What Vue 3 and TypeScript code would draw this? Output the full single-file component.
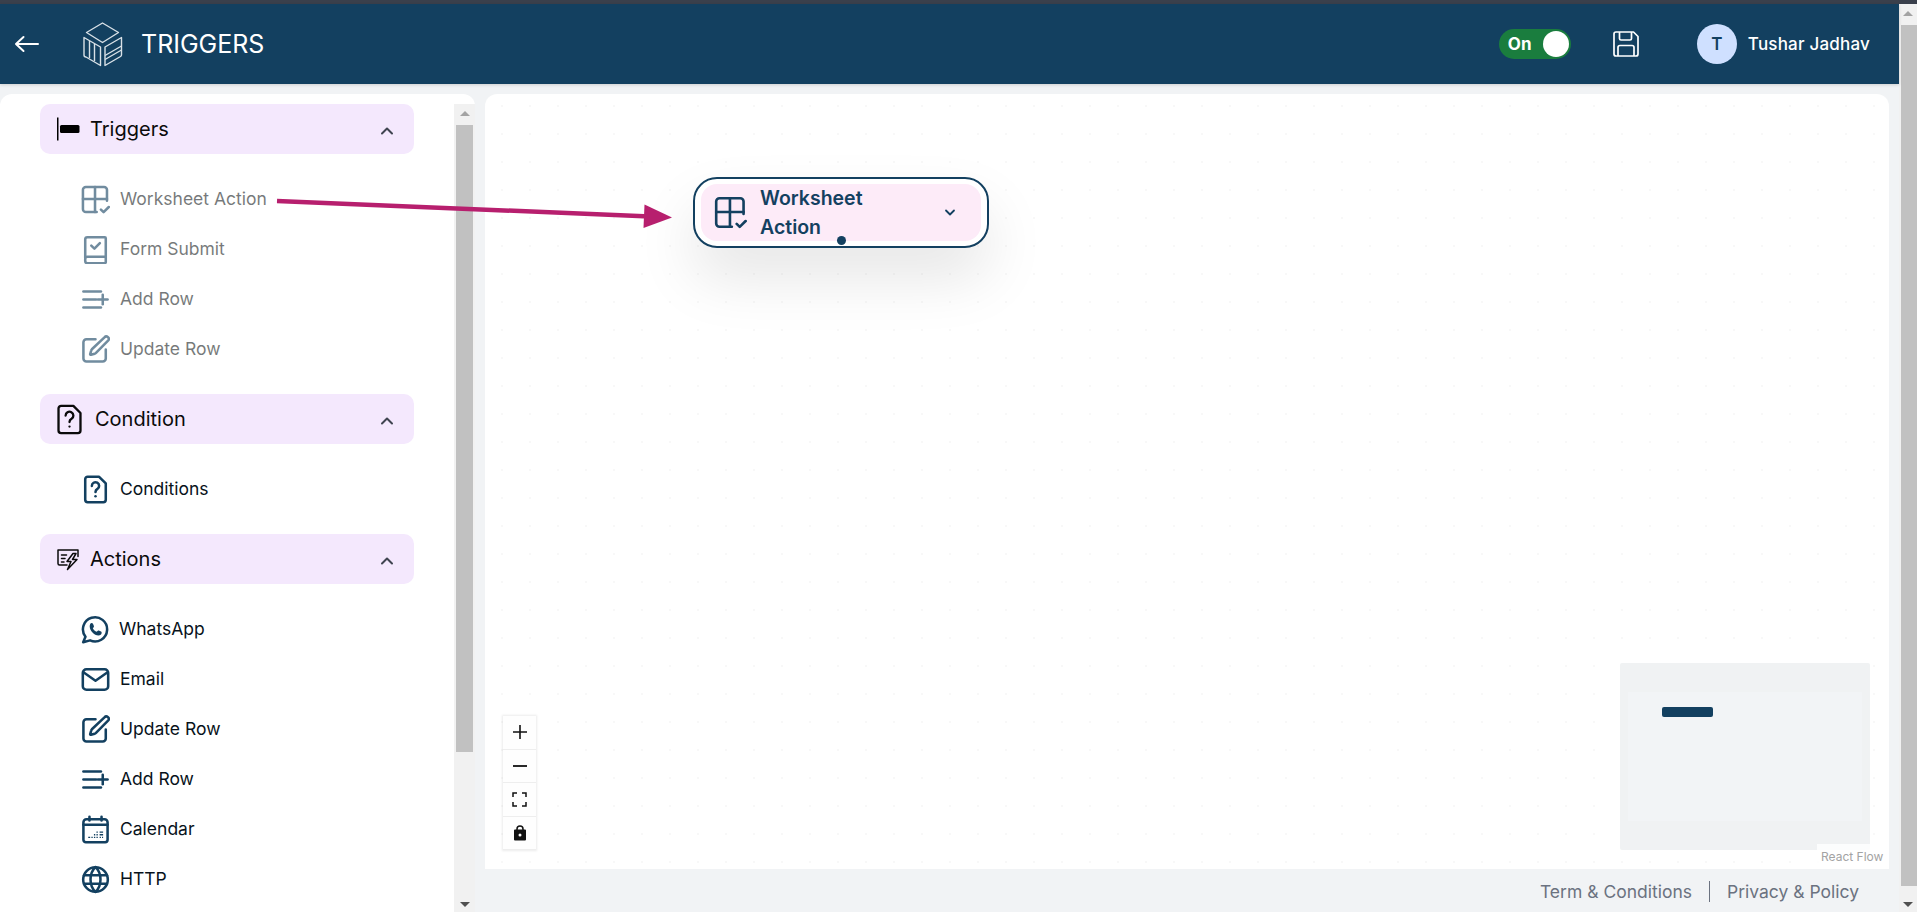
<script setup lang="ts">
const ICONS: Record<string, string[]> = {
  sheet: ['M21.5 13V4a2.4 2.4 0 0 0-2.4-2.4H4A2.4 2.4 0 0 0 1.6 4v16A2.4 2.4 0 0 0 4 22.4h9', 'M11.6 1.6v20.8', 'M1.6 11.6h19.9', 'M16.5 20.3l2.2 2.2 4.3-4.3'],
  form: ['M3.5 19V3.6A1.8 1.8 0 0 1 5.3 1.8h14.4a.8.8 0 0 1 .8.8v19.900a.8.8 0 0 1-.8.8H5.300a1.800 1.800 0 0 1-1.800-1.800v-1.700a1.800 1.800 0 0 1 1.800-1.800h15.200', 'M8.500 8.800l2.600 2.500 4.500-4.500'],
  add: ['M2 5.400h14.500', 'M2 12h10.500', 'M2 18.600h14.500', 'M14 12h8', 'M18 8v8'],
  pen: ['M12 3.500H4.500a2.500 2.500 0 0 0-2.500 2.500v13.500a2.500 2.500 0 0 0 2.500 2.500h13.500a2.500 2.500 0 0 0 2.500-2.500v-7.500', 'M19.400 1.900a1.900 1.900 0 0 1 3 2.800L12.200 15a2 2 0 0 1-.9.500l-3.100.900a.5.500 0 0 1-.6-.6l.9-3.100a2 2 0 0 1 .5-.9z'],
  question: ['M15 1.500H5.500a2 2 0 0 0-2 2v17a2 2 0 0 0 2 2h13a2 2 0 0 0 2-2V7z', 'M9 9a3 3 0 1 1 4.600 2.500c-1 .6-1.600 1.200-1.600 2.500', 'M12 17.500h.01'],
  whatsapp: ['M1.800 22.500l1.900-4.500A10 10 0 1 1 7.500 21z'],
  mail: ['M4.500 3.500h15a3 3 0 0 1 3 3v11a3 3 0 0 1-3 3h-15a3 3 0 0 1-3-3v-11a3 3 0 0 1 3-3z', 'M2 6l10 7 10-7'],
  calendar: ['M4.500 3.500h15a2.500 2.500 0 0 1 2.500 2.500v14.500a2 2 0 0 1-2 2H4a2 2 0 0 1-2-2V6a2.500 2.500 0 0 1 2.500-2.500z', 'M7 1.500v3', 'M17 1.500v3', 'M2 8h20'],
  globe: ['M12 1.800a10.200 10.200 0 1 0 0 20.400a10.200 10.200 0 0 0 0-20.400z', 'M2.500 8.500h19', 'M2.500 15.500h19', 'M12 1.800c-5.500 5-5.500 15.400 0 20.400', 'M12 1.800c5.500 5 5.500 15.400 0 20.400'],
  actions: ['M11 18H3.500a1.500 1.500 0 0 1-1.500-1.500V3h20v6.500', 'M5.500 8h5', 'M5.500 11.500h3.500', 'M5.500 15h2.500', 'M17 6.500l-6 8h4l-3.500 8 9.500-10h-4.500l3.500-6z']
}
/* small solid details drawn over the outlined icon */
const FILLS: Record<string, string> = {
  whatsapp: 'M8.800 6.700c.5 0 .9.100 1.100.600l.8 1.900c.1.300 0 .6-.2.900l-.7.800c.7 1.400 1.800 2.400 3.200 3l.9-.9c.2-.2.500-.3.800-.2l1.900.9c.4.200.5.500.5 1 0 1.400-1.200 2.300-2.600 2.300-3.700-.3-7.100-3.700-7.300-7.500 0-1.400.6-2.800 1.600-2.800z',
  calendar: 'M6 18h1.600v1.100H6zM8.600 18h1.100v1.100H8.600zM10.700 18h1.100v1.100h-1.100zM12.800 18h1.100v1.100h-1.100zM15.400 18h1.100v1.100h-1.100zM17.400 18h.9v1.100h-.9zM10.700 15.800h1.100v1.100h-1.100zM12.800 15.800h1.100v1.100h-1.100zM15.400 15.800h2.900v1.100h-2.900zM12.800 13.600h1.100v1.100h-1.100zM15.400 13.600h2.900v1.100h-2.900z'
}
interface Item { label: string; icon: string; wide?: boolean }
interface Group { title: string; icon: string; cls: string; muted?: boolean; items: Item[] }
const groups: Group[] = [
  { title: 'Triggers', icon: 'bar', cls: 'trig', muted: true, items: [
    { label: 'Worksheet Action', icon: 'sheet' },
    { label: 'Form Submit', icon: 'form' },
    { label: 'Add Row', icon: 'add' },
    { label: 'Update Row', icon: 'pen' }
  ] },
  { title: 'Condition', icon: 'question', cls: 'cond', items: [
    { label: 'Conditions', icon: 'question' }
  ] },
  { title: 'Actions', icon: 'actions', cls: 'act', items: [
    { label: 'WhatsApp', icon: 'whatsapp', wide: true },
    { label: 'Email', icon: 'mail' },
    { label: 'Update Row', icon: 'pen' },
    { label: 'Add Row', icon: 'add' },
    { label: 'Calendar', icon: 'calendar' },
    { label: 'HTTP', icon: 'globe' }
  ] }
]
</script>

<template>
  <div class="page">
    <div class="topline"></div>
    <div class="frame">
      <div class="main">
        <header class="header">
          <button class="back" aria-label="Back">
            <svg width="26" height="20" viewBox="0 0 26 20" fill="none" stroke="#fff" stroke-width="2" stroke-linecap="round" stroke-linejoin="round"><path d="M2 10h22M9.500 3L2 10l7.500 7" /></svg>
          </button>
          <svg class="logo" width="42" height="46" viewBox="0 0 42 46" fill="none" stroke="#d9e1e7" stroke-width="1.400" stroke-linejoin="round">
            <path d="M20.500 2L36.500 11.500 20.500 21.500 4.500 11.500z" />
            <path d="M2 16.500l16.500 9.500v18.500L4 36a2 2 0 0 1-2-2z" />
            <path d="M7.500 20v17M12.500 23v17" />
            <path d="M23 26l16.500-9.500V34a2 2 0 0 1-1 1.500L23 44.500z" />
            <path d="M23 34.500l16.500-9.500M23 38.500l16.500-9.500" />
          </svg>
          <h1 class="title">TRIGGERS</h1>
          <div class="spacer"></div>
          <div class="toggle"><span>On</span><i></i></div>
          <svg class="save" width="28" height="28" viewBox="0 0 28 28" fill="none" stroke="#fff" stroke-width="1.700" stroke-linejoin="round">
            <path d="M4 2h17.500L26 6.500V24a2 2 0 0 1-2 2H4a2 2 0 0 1-2-2V4a2 2 0 0 1 2-2z" />
            <path d="M7.500 2v6.500a1.500 1.500 0 0 0 1.500 1.500h9a1.500 1.500 0 0 0 1.500-1.500V2" />
            <path d="M6 26v-8.500a2 2 0 0 1 2-2h12a2 2 0 0 1 2 2V26" />
          </svg>
          <div class="avatar">T</div>
          <span class="uname">Tushar Jadhav</span>
        </header>

        <div class="body">
          <aside class="side">
            <div class="side-content">
              <section v-for="g in groups" :key="g.title" class="group" :class="g.cls">
                <div class="ghead">
                  <svg v-if="g.icon === 'bar'" class="gicon" width="24" height="24" viewBox="0 0 24 24">
                    <rect x="0" y="0.500" width="1.500" height="23" fill="#000" />
                    <rect x="3" y="8" width="19.500" height="8" rx="1.500" fill="#000" />
                  </svg>
                  <svg v-else class="gicon" viewBox="0 0 24 24" fill="none" stroke="#0b0b0b" stroke-linecap="round" stroke-linejoin="round">
                    <path v-for="d in ICONS[g.icon]" :key="d" :d="d" />
                  </svg>
                  <span class="gtitle">{{ g.title }}</span>
                  <svg class="chev" width="14" height="10" viewBox="0 0 14 10" fill="none" stroke="#3f4450" stroke-width="2" stroke-linecap="round" stroke-linejoin="round"><path d="M2 7.500l5-5 5 5" /></svg>
                </div>
                <ul class="items" :class="{ muted: g.muted }">
                  <li v-for="it in g.items" :key="it.label" class="item" :class="{ wide: it.wide }">
                    <svg class="iicon" width="29" height="29" viewBox="0 0 24 24" fill="none" stroke="#134060" stroke-width="2.100" stroke-linecap="round" stroke-linejoin="round">
                      <path v-for="d in ICONS[it.icon]" :key="d" :d="d" />
                      <path v-if="FILLS[it.icon]" :d="FILLS[it.icon]" fill="#134060" stroke="none" />
                    </svg>
                    <span class="ilabel">{{ it.label }}</span>
                  </li>
                </ul>
              </section>
            </div>
            <div class="bar side-bar">
              <i class="up"></i>
              <b class="thumb"></b>
              <i class="grow"></i>
              <i class="down"></i>
            </div>
          </aside>

          <div class="right">
            <div class="canvas">
              <div class="node">
                <div class="node-in">
                  <svg width="33" height="33" viewBox="0 0 24 24" fill="none" stroke="#134060" stroke-width="1.900" stroke-linecap="round" stroke-linejoin="round">
                    <path v-for="d in ICONS.sheet" :key="d" :d="d" />
                  </svg>
                  <span class="node-text">Worksheet<br />Action</span>
                  <svg class="node-chev" width="12" height="8" viewBox="0 0 12 8" fill="none" stroke="#134060" stroke-width="1.800" stroke-linecap="round" stroke-linejoin="round"><path d="M2 1.500L6 5.500l4-4" /></svg>
                </div>
                <i class="handle"></i>
              </div>

              <div class="controls">
                <div class="ctl"><svg width="16" height="16" viewBox="0 0 16 16" stroke="#111" stroke-width="1.600"><path d="M8 1v14M1 8h14" /></svg></div>
                <div class="ctl"><svg width="16" height="16" viewBox="0 0 16 16" stroke="#111" stroke-width="1.800"><path d="M1 8h14" /></svg></div>
                <div class="ctl"><svg width="15" height="15" viewBox="0 0 15 15" fill="none" stroke="#111" stroke-width="1.500"><path d="M1 5V1h4M10 1h4v4M14 10v4h-4M5 14H1v-4" /></svg></div>
                <div class="ctl"><svg width="14" height="16" viewBox="0 0 14 16"><path d="M4 5.500V4a3 3 0 0 1 6 0v1" fill="none" stroke="#111" stroke-width="1.500" /><path fill="#111" fill-rule="evenodd" d="M2 4.500h10a1 1 0 0 1 1 1v9a1 1 0 0 1-1 1H2a1 1 0 0 1-1-1v-9a1 1 0 0 1 1-1zm5 4a1.500 1.500 0 1 0 0 3 1.500 1.500 0 0 0 0-3z" /></svg></div>
              </div>

              <div class="minimap">
                <div class="mini-view"><i class="mini-node"></i></div>
              </div>
              <div class="attr">React Flow</div>
            </div>
            <footer class="footer">
              <span>Term &amp; Conditions</span>
              <i class="sep"></i>
              <span>Privacy &amp; Policy</span>
            </footer>
          </div>
        </div>
      </div>
      <div class="bar page-bar">
        <i class="up"></i>
        <b class="thumb"></b>
        <i class="grow"></i>
        <i class="down"></i>
      </div>
    </div>

    <svg class="arrow" width="1917" height="912" viewBox="0 0 1917 912">
      <path d="M277 201L650 216.500" stroke="#b71f6e" stroke-width="4.500" fill="none" />
      <path d="M672 217.500L644.500 204.500 643.500 228z" fill="#b71f6e" />
    </svg>
  </div>
</template>

<style>
html, body { margin: 0; padding: 0; overflow: hidden; }
</style>

<style scoped>
.page {
  position: relative;
  width: 1917px;
  height: 912px;
  overflow: hidden;
  display: flex;
  flex-direction: column;
  background: #f1f3f5;
  font-family: Inter, "Liberation Sans", sans-serif;
}
.topline { height: 4px; background: #3a404c; flex: none; }
.frame { flex: 1; display: flex; min-height: 0; }
.main { flex: 1; display: flex; flex-direction: column; min-width: 0; }

.header {
  flex: none;
  height: 80px;
  background: #134060;
  display: flex;
  align-items: center;
  color: #fff;
  box-shadow: 0 1px 3px rgba(0, 0, 0, .15);
  position: relative;
  z-index: 1;
}
.back { margin-left: 14px; padding: 0; border: 0; background: none; display: flex; width: 26px; }
.logo { margin-left: 42px; }
.title { margin: 0 0 0 17px; font-size: 25px; font-weight: 400; letter-spacing: 0; }
.spacer { flex: 1; }
.toggle {
  width: 72px;
  height: 30px;
  border-radius: 15px;
  background: #1a7d3e;
  display: flex;
  align-items: center;
  justify-content: space-between;
  padding: 0 2px 0 9px;
  box-sizing: border-box;
  font-weight: 700;
  font-size: 17px;
}
.toggle i { width: 26px; height: 26px; border-radius: 50%; background: #fff; }
.save { margin-left: 41px; }
.avatar {
  margin-left: 57px;
  width: 40px;
  height: 40px;
  border-radius: 50%;
  background: #cfe0ff;
  color: #134060;
  font-size: 17px;
  font-weight: 600;
  display: flex;
  align-items: center;
  justify-content: center;
}
.uname { margin: 0 29px 0 11px; font-size: 17px; font-weight: 500; letter-spacing: .2px; }

.body { flex: 1; display: flex; min-height: 0; padding-top: 10px; }
.side {
  width: 475px;
  flex: none;
  background: #fff;
  border-radius: 12px 12px 0 0;
  display: flex;
  overflow: hidden;
}
.side-content { flex: 1; padding: 10px 40px 0; min-width: 0; overflow: hidden; }
.bar { display: flex; flex-direction: column; align-items: center; flex: none; background: #f1f1f1; }
.bar .thumb { display: block; background: #c1c1c1; flex: none; }
.bar .up, .bar .down { width: 0; height: 0; border-left: 5px solid transparent; border-right: 5px solid transparent; }
.bar .up { border-bottom: 5px solid #a3a3a3; margin: 7px 0 9px; }
.bar .down { border-top: 5px solid #505050; margin: 6px 0 5px; }
.bar .grow { flex: 1; }
.side-bar { width: 21px; margin-top: 10px; }
.side-bar .thumb { width: 17px; height: 627px; }
.page-bar { width: 18px; }
.page-bar .thumb { width: 16px; height: 861px; margin-left: 2px; }

.group { margin-bottom: 20px; }
.ghead {
  height: 50px;
  width: 374px;
  background: #f4e8fd;
  border-radius: 10px;
  display: flex;
  align-items: center;
  padding: 0 20px 0 17px;
  box-sizing: border-box;
  color: #0b0b0b;
}
.gicon { flex: none; }
.trig .gicon { margin-right: 9px; }
.cond .ghead { padding-left: 14px; }
.cond .gicon { width: 31px; height: 31px; margin-right: 10px; stroke-width: 1.800; }
.act .ghead { padding-left: 16px; }
.act .gicon { width: 24px; height: 24px; margin-right: 10px; stroke-width: 1.500; }
.gtitle { flex: 1; font-size: 20px; }
.chev { margin-top: 3px; }

.items { list-style: none; margin: 20px 0 0; padding: 0 0 0 41px; }
.item {
  height: 50px;
  display: flex;
  align-items: center;
  gap: 10px;
  font-size: 17.500px;
  color: #08121b;
}
.ilabel { margin-bottom: 2px; }
.item.wide { gap: 9px; }
.iicon { flex: none; }
.muted { opacity: .6; }
.muted .item { color: #1a1f25; }

.right { flex: 1; display: flex; flex-direction: column; min-width: 0; padding-left: 10px; }
.canvas {
  flex: 1;
  position: relative;
  margin-right: 10px;
  background-color: #fff;
  background-image: radial-gradient(circle, #f8f8f8 1px, transparent 1px);
  background-size: 28px 28px;
  background-position: 3px -2px;
  border-radius: 12px 12px 0 0;
  overflow: hidden;
}
.node {
  position: absolute;
  left: 208px;
  top: 83px;
  width: 296px;
  height: 71px;
  box-sizing: border-box;
  border: 2px solid #134060;
  border-radius: 24px;
  background: #fff;
  padding: 5px 6px;
  box-shadow: 0 30px 60px rgba(0, 0, 0, .1);
}
.node-in {
  height: 100%;
  background: #fdebf8;
  border-radius: 16px;
  display: flex;
  align-items: center;
  padding-left: 13px;
  box-sizing: border-box;
}
.node-text {
  margin-left: 13px;
  font-size: 19.500px;
  font-weight: 600;
  line-height: 29px;
  color: #134060;
  flex: 1;
}
.node-chev { margin-right: 25px; }
.handle {
  position: absolute;
  left: 142px;
  top: 57px;
  width: 9px;
  height: 9px;
  border-radius: 50%;
  background: #134060;
}

.controls {
  position: absolute;
  left: 18px;
  top: 622px;
  width: 33px;
  background: #fefefe;
  box-shadow: 0 0 2px 1px rgba(0, 0, 0, .08);
}
.ctl {
  height: 33.500px;
  display: flex;
  align-items: center;
  justify-content: center;
  border-bottom: 1px solid #eee;
  box-sizing: border-box;
}
.minimap {
  position: absolute;
  left: 1135px;
  top: 569px;
  width: 250px;
  height: 187px;
  background: #f0f2f3;
  border-radius: 2px;
}
.mini-view {
  position: absolute;
  left: 8px;
  top: 29px;
  width: 234px;
  height: 129px;
  background: #f2f4f6;
}
.mini-node {
  position: absolute;
  left: 34px;
  top: 15px;
  width: 51px;
  height: 10px;
  border-radius: 2px;
  background: #134060;
}
.attr {
  position: absolute;
  right: 0;
  bottom: 0;
  height: 25px;
  padding: 0 4px;
  display: flex;
  align-items: center;
  width: 64px;
  white-space: nowrap;
  background: rgba(255, 255, 255, .8);
  font-size: 12px;
  color: #a3a3a3;
}
.footer {
  flex: none;
  height: 43px;
  padding-top: 1px;
  box-sizing: border-box;
  display: flex;
  align-items: center;
  justify-content: flex-end;
  padding-right: 40px;
  color: #6b7280;
  font-size: 17.500px;
}
.sep { width: 1px; height: 21px; background: #6b7280; margin: 0 17px; }
.arrow { position: absolute; left: 0; top: 0; pointer-events: none; }
</style>
